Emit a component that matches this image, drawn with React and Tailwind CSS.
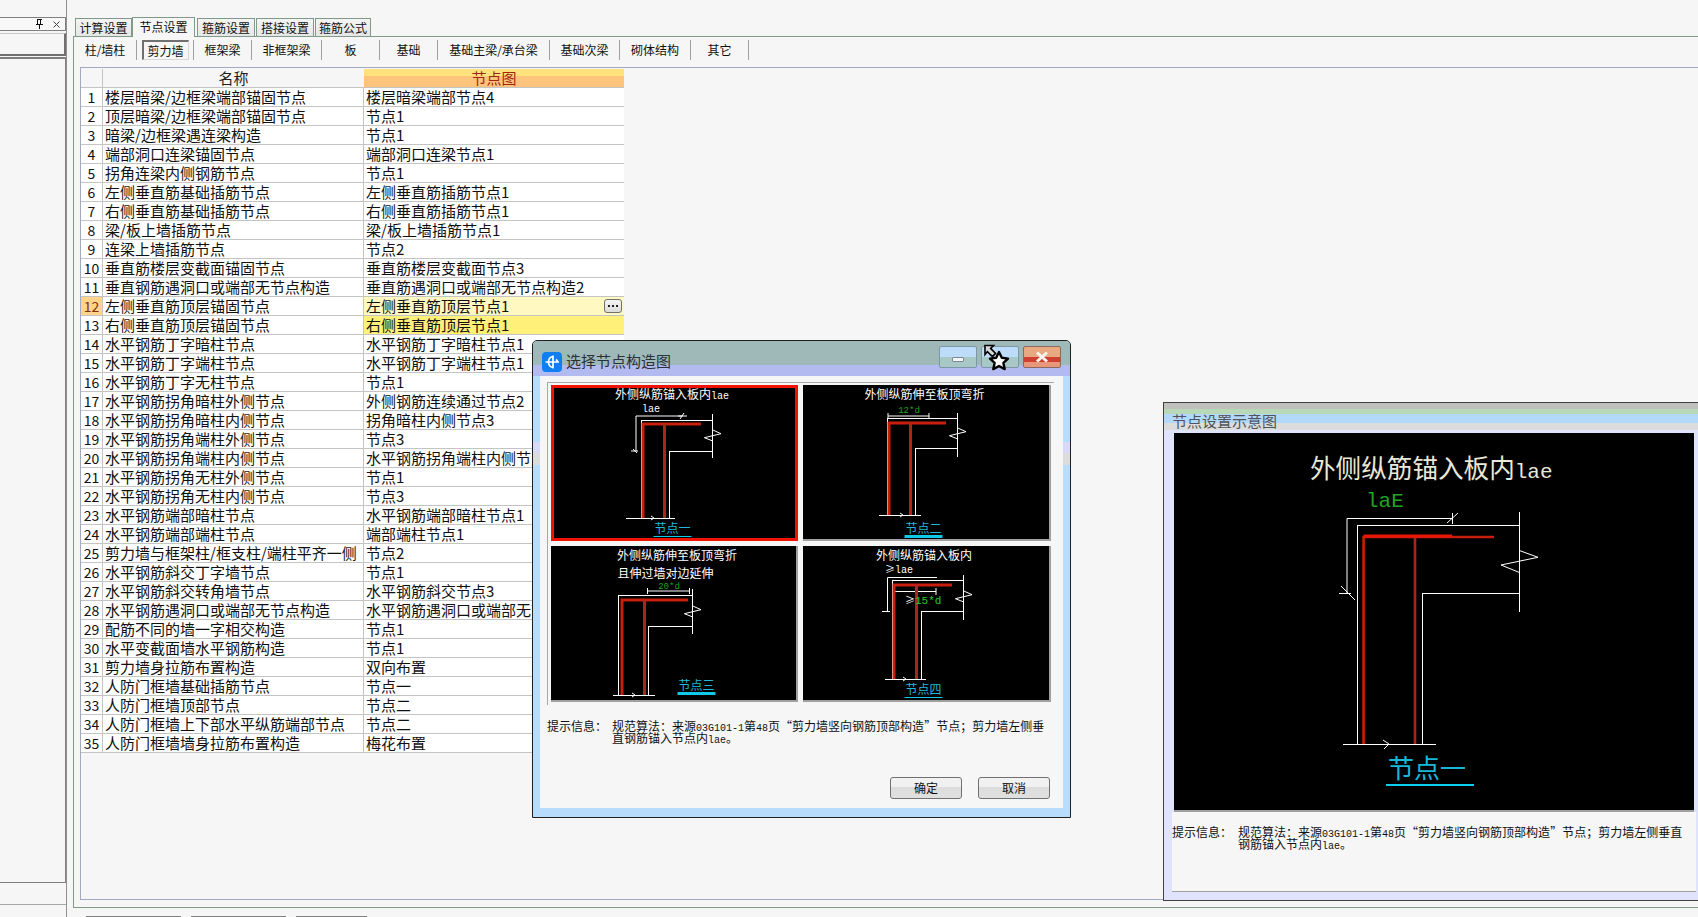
import React from "react";

const COLON = "\uFF1A";
const SEMI = "\uFF1B";

const rows = [
  ["楼层暗梁/边框梁端部锚固节点", "楼层暗梁端部节点4"],
  ["顶层暗梁/边框梁端部锚固节点", "节点1"],
  ["暗梁/边框梁遇连梁构造", "节点1"],
  ["端部洞口连梁锚固节点", "端部洞口连梁节点1"],
  ["拐角连梁内侧钢筋节点", "节点1"],
  ["左侧垂直筋基础插筋节点", "左侧垂直筋插筋节点1"],
  ["右侧垂直筋基础插筋节点", "右侧垂直筋插筋节点1"],
  ["梁/板上墙插筋节点", "梁/板上墙插筋节点1"],
  ["连梁上墙插筋节点", "节点2"],
  ["垂直筋楼层变截面锚固节点", "垂直筋楼层变截面节点3"],
  ["垂直钢筋遇洞口或端部无节点构造", "垂直筋遇洞口或端部无节点构造2"],
  ["左侧垂直筋顶层锚固节点", "左侧垂直筋顶层节点1"],
  ["右侧垂直筋顶层锚固节点", "右侧垂直筋顶层节点1"],
  ["水平钢筋丁字暗柱节点", "水平钢筋丁字暗柱节点1"],
  ["水平钢筋丁字端柱节点", "水平钢筋丁字端柱节点1"],
  ["水平钢筋丁字无柱节点", "节点1"],
  ["水平钢筋拐角暗柱外侧节点", "外侧钢筋连续通过节点2"],
  ["水平钢筋拐角暗柱内侧节点", "拐角暗柱内侧节点3"],
  ["水平钢筋拐角端柱外侧节点", "节点3"],
  ["水平钢筋拐角端柱内侧节点", "水平钢筋拐角端柱内侧节点1"],
  ["水平钢筋拐角无柱外侧节点", "节点1"],
  ["水平钢筋拐角无柱内侧节点", "节点3"],
  ["水平钢筋端部暗柱节点", "水平钢筋端部暗柱节点1"],
  ["水平钢筋端部端柱节点", "端部端柱节点1"],
  ["剪力墙与框架柱/框支柱/端柱平齐一侧", "节点2"],
  ["水平钢筋斜交丁字墙节点", "节点1"],
  ["水平钢筋斜交转角墙节点", "水平钢筋斜交节点3"],
  ["水平钢筋遇洞口或端部无节点构造", "水平钢筋遇洞口或端部无节点构造1"],
  ["配筋不同的墙一字相交构造", "节点1"],
  ["水平变截面墙水平钢筋构造", "节点1"],
  ["剪力墙身拉筋布置构造", "双向布置"],
  ["人防门框墙基础插筋节点", "节点一"],
  ["人防门框墙顶部节点", "节点二"],
  ["人防门框墙上下部水平纵筋端部节点", "节点二"],
  ["人防门框墙墙身拉筋布置构造", "梅花布置"],
];

const tabs = [
  ["计算设置", "w-[57px] ml-[2px]"],
  ["节点设置", "w-[63px]"],
  ["箍筋设置", "w-[58px] ml-[2px]"],
  ["搭接设置", "w-[58px] ml-[1px]"],
  ["箍筋公式", "w-[56px] ml-[1px]"],
];

const subTabs = [
  ["柱/墙柱", "w-[63px]"],
  ["剪力墙", "w-[57px]"],
  ["框架梁", "w-[58px]"],
  ["非框架梁", "w-[70px]"],
  ["板", "w-[58px]"],
  ["基础", "w-[58px]"],
  ["基础主梁/承台梁", "w-[112px]"],
  ["基础次梁", "w-[70px]"],
  ["砌体结构", "w-[71px]"],
  ["其它", "w-[58px]"],
];

const LATIN = "'Liberation Mono','Noto Sans CJK SC',monospace";
const CJK = "'Noto Sans CJK SC',sans-serif";

function Wall({ g, sw = 1, rw = 3 }) {
  return (
    <g fill="none">
      <path
        d={`M${g.wl} ${g.b}V${g.wt}H${g.wr}M${g.wr} ${g.vt}V${g.vb}M${g.wr} ${g.ih}H${g.il}V${g.b}M${g.bl} ${g.b}H${g.br}`}
        stroke="#fff"
        strokeWidth={sw}
        shapeRendering="crispEdges"
      />
      <path d={`M${g.r1} ${g.b}V${g.rt}H${g.re}`} stroke="#c81e0c" strokeWidth={rw} />
      <path d={`M${g.r2} ${g.rt}V${g.b}`} stroke="#a82818" strokeWidth={rw} />
      <path d={g.zig} stroke="#fff" strokeWidth={sw} />
      <path d={g.tick} stroke="#fff" strokeWidth={sw} />
    </g>
  );
}

function Caption({ x, y, u, text, thick, size = 12, w = 38 }) {
  return (
    <g>
      <text x={x} y={y + size * 0.38} textAnchor="middle" fontSize={size} fill="#22b8dc" fontFamily={CJK}>
        {text}
      </text>
      <rect x={x - w / 2} y={u - (thick ? 1 : 0)} width={w} height={thick ? 3 : 1} fill="#10c8e8" />
    </g>
  );
}

function Label({ x, y, anchor = "middle", children, size = 12, fill = "#fff" }) {
  return (
    <text x={x} y={y + size * 0.38} textAnchor={anchor} fontSize={size} fill={fill} fontFamily={CJK}>
      {children}
    </text>
  );
}

function Mono({ children, size = 10, fill }) {
  return (
    <tspan fontFamily={LATIN} fontSize={size} fill={fill}>
      {children}
    </tspan>
  );
}

function Thumb({ w, selected, children }) {
  return (
    <div className={selected ? "h-[156px] bg-black border-[3px] border-[#f01400]" : "h-[156px] bg-black border-r-2 border-b-2 border-[#a0a0a0]"}>
      <svg width={w} height="156" className={selected ? "block -mt-[3px] -ml-[3px]" : "block"}>
        {children}
      </svg>
    </div>
  );
}

function WinButton({ kind, className, children }) {
  const skin =
    kind === "close"
      ? "border-[#8a6a60] bg-[linear-gradient(#e8a880_0%,#e8a880_50%,#d04030_50%,#d04030_76%,#e89878_76%,#e89878_100%)]"
      : "border-[#7a98a8] bg-[linear-gradient(#bcdcfa_0%,#bcdcfa_50%,#a8c8c8_50%,#a8c8c8_100%)]";
  return (
    <div className={`h-[22px] flex items-center justify-center border rounded-[2px] ${skin} ${className}`}>{children}</div>
  );
}

function Mark({ children }) {
  return <span className="font-['Liberation_Mono'] text-[10px]">{children}</span>;
}

function Q({ children }) {
  return <span className="inline-block w-[12px] text-center">{children}</span>;
}

function Dialog() {
  return (
    <div className="absolute left-[532px] top-[340px] w-[539px] h-[478px] border border-[#202020] rounded-t-[5px] bg-[#b8dcfc] flex flex-col overflow-visible">
      <div className="absolute left-0 top-[101px] w-[7px] h-[23px] bg-[linear-gradient(#d8d8f8_0%,#d8d8f8_50%,#dcdcdc_50%,#dcdcdc_100%)]" />
      <div className="absolute right-0 top-[101px] w-[7px] h-[23px] bg-[linear-gradient(#d8d8f8_0%,#d8d8f8_50%,#dcdcdc_50%,#dcdcdc_100%)]" />
      <div className="h-[35px] shrink-0 relative flex items-center rounded-t-[4px] bg-[linear-gradient(#9fb9b9_0%,#9fb9b9_68%,#b2baf0_68%,#b2baf0_100%)] pl-[9px] pr-[9px]">
        <svg width="20" height="20" viewBox="0 0 20 20" className="mt-[6px] shrink-0">
          <rect width="20" height="20" rx="4" fill="#0f80f4" />
          <path d="M11 3.5V16.5M3.5 10H17M11 4.5C8 5 6.5 7 6.5 10C6.5 13 8 15 11 15.5M14 7.5C15 8.2 15.5 9 15.5 10" stroke="#fff" strokeWidth="1.7" fill="none" />
        </svg>
        <span className="ml-[4px] mt-[4px] text-[15px] leading-[20px] text-[#2c3038]">选择节点构造图</span>
        <div className="ml-auto mt-[-4px] flex gap-[4px]">
          <WinButton className="w-[38px]">
            <span className="block mt-[5px] w-[12px] h-[5px] rounded-[1px] bg-[#f4f6f8] border border-[#7a8a90]" />
          </WinButton>
          <WinButton className="w-[38px]" />
          <WinButton kind="close" className="w-[38px]">
            <svg width="14" height="12" viewBox="0 0 14 12"><path d="M2 1.5l10 9M12 1.5l-10 9" stroke="#f8f4f0" strokeWidth="3" /></svg>
          </WinButton>
        </div>
        <svg width="28" height="27" viewBox="0 0 28 27" className="absolute left-[450px] top-[3px]">
          <path d="M2 1.5h8.5L7.6 4.4l5 5-3.2 3.2-5-5L2 10.5z" fill="#d8d8d8" stroke="#000" strokeWidth="1.6" />
          <path d="M16 8l2.8 5.8 6.2.8-4.6 4.3 1.3 6.2-5.7-3.1-5.7 3.1 1.3-6.2-4.6-4.3 6.2-.8z" fill="#fff" stroke="#000" strokeWidth="2.4" strokeLinejoin="round" />
        </svg>
      </div>
      <div className="mx-[7px] h-[432px] shrink-0 bg-[#f5f6f5] flex flex-col">
        <div className="ml-[7px] mt-[6px] w-[507px] h-[323px] border-t border-l border-[#a8a8a8] pl-[3px] pt-[2px]">
          <div className="grid grid-cols-[247px_248px] gap-x-[5px] gap-y-[5px]">
            <Thumb w={247} selected>
              <Label x={121} y={9}>外侧纵筋锚入板内<Mono>lae</Mono></Label>
              <Label x={100} y={23} size={10}><Mono>lae</Mono></Label>
              <path d="M131.5 31H85V66M127 31h9M133 28l-4 6M80 66h7M82 64l4 4" stroke="#fff" fill="none" />
              <Wall g={{ wl: 90, wt: 35, wr: 161.5, vt: 29, vb: 73, ih: 66, il: 118.5, b: 133, r1: 92, r2: 113.5, rt: 39, re: 150, bl: 75, br: 124, zig: "M161.8 45L170 48.7L153.4 52.7L161.8 56", tick: "M100 131l3 2-3 2" }} />
              <Caption x={121.5} y={143} u={151} text="节点一" />
            </Thumb>
            <Thumb w={248}>
              <Label x={121.5} y={9}>外侧纵筋伸至板顶弯折</Label>
              <Label x={106} y={25} fill="#1ea01e" size={9}><Mono size={9} fill="#1ea01e">12*d</Mono></Label>
              <path d="M85 31H126M85 28v6M126 28v6" stroke="#fff" fill="none" />
              <Wall g={{ wl: 84, wt: 33.5, wr: 154.5, vt: 28, vb: 72, ih: 63.5, il: 112, b: 130, r1: 86, r2: 107.5, rt: 38, re: 143, bl: 76, br: 118, zig: "M154.8 43L163 46.7L146.4 50.7L154.8 54", tick: "M97 128l3 2-3 2" }} />
              <Caption x={120.5} y={143} u={151} text="节点二" thick />
            </Thumb>
            <Thumb w={247}>
              <Label x={126} y={9}>外侧纵筋伸至板顶弯折</Label>
              <Label x={66.5} y={27} anchor="start">且伸过墙对边延伸</Label>
              <Label x={118} y={39.5} size={9}><Mono size={9} fill="#1ea01e">20*d</Mono></Label>
              <path d="M96.5 45H138.5M96.5 42v6M138.5 42v6" stroke="#fff" fill="none" />
              <Wall g={{ wl: 67.5, wt: 49.5, wr: 141.5, vt: 43, vb: 88, ih: 80, il: 97, b: 149, r1: 71, r2: 93.5, rt: 54, re: 137, bl: 61.5, br: 104, zig: "M141.8 60L150 63.7L133.4 67.7L141.8 71", tick: "M81 147l3 2-3 2" }} />
              <Caption x={145.5} y={139} u={147} text="节点三" thick />
            </Thumb>
            <Thumb w={248}>
              <Label x={121} y={9}>外侧纵筋锚入板内</Label>
              <Label x={82} y={23} anchor="start" size={10}>≥<Mono>lae</Mono></Label>
              <path d="M132 31.5H84.5V65.5M129 31.5h5M79 65.5h8M91 45.5H133M133 42v7" stroke="#fff" fill="none" />
              <Wall g={{ wl: 89, wt: 34.5, wr: 160.5, vt: 29, vb: 73.5, ih: 65.5, il: 118, b: 133, r1: 91, r2: 113.5, rt: 39, re: 149, bl: 81.5, br: 123, zig: "M160.8 45L169 48.7L152.4 52.7L160.8 56", tick: "M100 131l3 2-3 2" }} />
              <Label x={102} y={54} anchor="start" size={10}>≥<Mono size={11} fill="#28c828">15*d</Mono></Label>
              <Caption x={120.5} y={143} u={151} text="节点四" />
            </Thumb>
          </div>
        </div>
        <div className="mt-[15px] ml-[7px] flex text-[12px] leading-[12px] text-[#101010] whitespace-nowrap">
          <span className="w-[65px] shrink-0">提示信息{COLON}</span>
          <div>
            <div className="h-[12px]">规范算法{COLON}来源<Mark>03G101-1</Mark>第<Mark>48</Mark>页<Q>{"\u201C"}</Q>剪力墙竖向钢筋顶部构造<Q>{"\u201D"}</Q>节点{SEMI}剪力墙左侧垂</div>
            <div className="h-[12px]">直钢筋锚入节点内<Mark>lae</Mark>{"\u3002"}</div>
          </div>
        </div>
        <div className="mt-[33px] pr-[13px] flex justify-end gap-[16px]">
          {["确定", "取消"].map((t) => (
            <div key={t} className="w-[72px] h-[22px] flex items-center justify-center border border-[#707070] rounded-[3px] text-[12px] leading-none text-[#101010] bg-[linear-gradient(#f2f2f2_0%,#f0f0f0_45%,#dcdcdc_45%,#e0e0e0_100%)]">
              {t}
            </div>
          ))}
        </div>
      </div>
    </div>
  );
}

function Preview() {
  return (
    <div className="absolute left-[1163px] top-[402px] w-[535px] h-[499px] border-l border-t border-b border-[#404040] bg-[#dfe3fb] flex flex-col">
      <div className="h-[27px] shrink-0 relative bg-[linear-gradient(#c0c0bc_0%,#c0c0bc_24%,#b8d8b8_24%,#b8d8b8_40%,#b2d9fb_40%,#b2d9fb_74%,#dcdcdc_74%,#dcdcdc_100%)]">
        <span className="absolute left-[8px] top-[8px] text-[15px] leading-[20px] text-[#505458]">节点设置示意图</span>
      </div>
      <div className="ml-[10px] mt-[3px] w-[520px] h-[379px] shrink-0 bg-black border-b-2 border-[#a0a0a0]">
        <svg width="520" height="377" className="block">
          <text x="136" y="45" fontSize="25.6" fill="#e8e8d8" fontFamily={CJK}>
            外侧纵筋锚入板内<Mono size={21}>lae</Mono>
          </text>
          <text x="192" y="74" fontSize="21" fill="#22a422" fontFamily={LATIN}>laE</text>
          <path d="M278.5 85.5H173V160.5M278.5 80v11M284 80l-11 10M165 160.5h12M167 153l14 14" stroke="#fff" fill="none" />
          <Wall sw={1} rw={2.6} g={{ wl: 183.5, wt: 92.5, wr: 345.5, vt: 79, vb: 179, ih: 160.5, il: 248.5, b: 311, r1: 189.6, r2: 241, rt: 104, re: 320, bl: 169, br: 262, zig: "M345.9 117.7L364 124.3L327 132L345.9 139.7", tick: "M209 307l6 4-5 5" }} />
          <path d="M189.6 103H278" stroke="#e81800" strokeWidth="3" />
          <text x="253" y="345" textAnchor="middle" fontSize="26" fill="#18b8dc" fontFamily={CJK}>节点一</text>
          <rect x="212" y="351" width="88" height="2" fill="#08d0f0" />
        </svg>
      </div>
      <div className="ml-[8px] w-[524px] h-[80px] shrink-0 bg-[#f5f6f5] border-b border-[#a0a0a0] pt-[14px] flex text-[12px] leading-[12px] text-[#101010] whitespace-nowrap">
        <span className="w-[66px] shrink-0">提示信息{COLON}</span>
        <div>
          <div className="h-[12px]">规范算法{COLON}来源<Mark>03G101-1</Mark>第<Mark>48</Mark>页<Q>{"\u201C"}</Q>剪力墙竖向钢筋顶部构造<Q>{"\u201D"}</Q>节点{SEMI}剪力墙左侧垂直</div>
          <div className="h-[12px]">钢筋锚入节点内<Mark>lae</Mark>{"\u3002"}</div>
        </div>
      </div>
    </div>
  );
}

function Table() {
  return (
    <div className="w-[543px] text-[15px] leading-[18px] text-[#101010]">
      <div className="grid grid-cols-[22px_261px_260px] h-[18px]">
        <div className="border-r border-[#c4c4c4]" />
        <div className="text-center text-[#202020]">名称</div>
        <div className="text-center text-[#a02810] bg-[linear-gradient(#ffe27c_0%,#ffe27c_40%,#ffc47c_40%,#ffc47c_100%)]">节点图</div>
      </div>
      {rows.map((r, i) => {
        const n = i + 1;
        const col2 = n === 12 ? "bg-[#fff8c0]" : n === 13 ? "bg-[#fff07a]" : "bg-white";
        return (
          <div key={n} className="grid grid-cols-[22px_261px_260px] h-[19px] border-t border-[#c4c4c4] last:h-[20px] last:border-b">
            <div className={`border-r border-[#c4c4c4] text-center text-[14px] ${n === 12 ? "bg-[#ffd48c] text-[#803010]" : "bg-white"}`}>{n}</div>
            <div className="border-r border-[#c4c4c4] pl-[2px] bg-white whitespace-nowrap">{r[0]}</div>
            <div className={`relative pl-[2px] whitespace-nowrap ${col2}`}>
              {r[1]}
              {n === 12 && (
                <span className="absolute right-[2px] top-[2px] w-[18px] h-[14px] border border-[#707070] rounded-[3px] bg-[linear-gradient(#f4f4f4,#dcdcdc)] flex items-center justify-center gap-[2px]">
                  <span className="w-[2px] h-[2px] bg-[#202020]" />
                  <span className="w-[2px] h-[2px] bg-[#202020]" />
                  <span className="w-[2px] h-[2px] bg-[#202020]" />
                </span>
              )}
            </div>
          </div>
        );
      })}
    </div>
  );
}

export default function App() {
  return (
    <div className="relative w-[1698px] h-[917px] overflow-hidden bg-[#f5f6f5] flex font-['Noto_Sans_CJK_SC','Noto_Sans',sans-serif]">
      <aside className="w-[67px] h-full shrink-0 flex flex-col pt-[17px] border-r border-[#909090]">
        <div className="h-[14px] border-b border-r border-t border-[#808080] bg-[#f8f8f8] flex items-center justify-end pr-[5px] gap-[10px]">
          <svg width="8" height="10" viewBox="0 0 8 10"><path d="M2 .5h4.5M2.5 .5v5M5.5 .5v5M.5 5.5h7M4 5.5V10" stroke="#111" strokeWidth="1" fill="none" shapeRendering="crispEdges" /></svg>
          <svg width="7" height="7" viewBox="0 0 7 7"><path d="M.5 .5l6 6M6.5 .5l-6 6" stroke="#404040" fill="none" /></svg>
        </div>
        <div className="h-[23px] mt-[2px] border-t border-[#c8c8c8] border-b-2 border-r-2 border-b-[#707070] border-r-[#707070]" />
        <div className="h-[826px] mt-[1px] border-t-2 border-b border-r border-[#808080]" />
        <div className="h-[22px] border-b border-[#a8a8a8]" />
      </aside>

      <main className="flex-1 min-w-0 pt-[16px] pl-[6px] flex flex-col">
        <div className="h-[20px] flex items-end text-[12px] text-[#101010]">
          {tabs.map(([t, w], i) => (
            <div
              key={t}
              className={`${w} flex items-center justify-center leading-[16px] border-l border-t border-r border-[#7f9a88] ${
                i === 1 ? "h-[20px] bg-[#f5f6f5] relative top-[1px] pb-[2px]" : "h-[18px] bg-[linear-gradient(#f4f4f4,#e6e6e6)]"
              }`}
            >
              {t}
            </div>
          ))}
        </div>
        <div className="h-[872px] shrink-0 border-t border-l border-b border-[#7f9a88] flex flex-col">
          <div className="h-[20px] mt-[3px] flex text-[12px] leading-[20px] text-[#101010] whitespace-nowrap">
            {subTabs.map(([t, w], i) => (
              <div key={t} className={`${w} flex items-center justify-center border-r border-[#a0a0a0]`}>
                {i === 1 ? (
                  <span className="block px-[5px] w-[47px] h-[20px] text-center border-l-2 border-t-2 border-r border-b border-l-[#707070] border-t-[#707070] border-r-[#d8d8d8] border-b-[#d8d8d8] leading-[18px] whitespace-nowrap -indent-[1px]">
                    {t}
                  </span>
                ) : (
                  t
                )}
              </div>
            ))}
          </div>
          <div className="ml-[6px] mt-[7px] h-[833px] border-t border-l border-b border-[#a2aac2] pt-[1px]">
            <Table />
          </div>
        </div>
        <div className="ml-[13px] mt-[8px] flex gap-[10px]">
          <div className="w-[95px] h-[1px] bg-[#808080]" />
          <div className="w-[95px] h-[1px] bg-[#808080]" />
          <div className="w-[71px] h-[1px] bg-[#808080]" />
        </div>
      </main>

      <Dialog />
      <Preview />
    </div>
  );
}
